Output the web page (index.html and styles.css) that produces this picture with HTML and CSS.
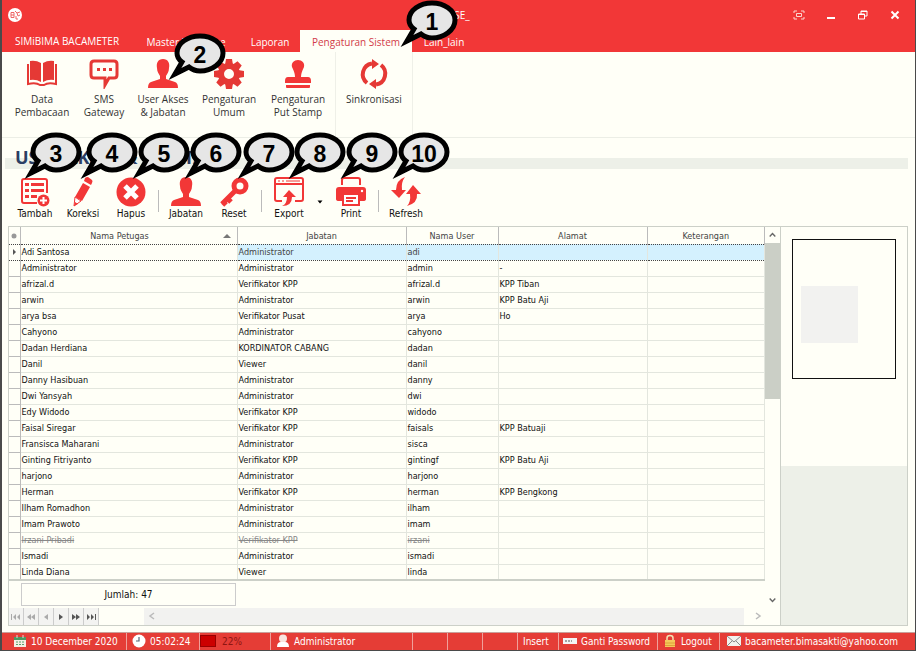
FILE: index.html
```html
<!DOCTYPE html>
<html lang="id">
<head>
<meta charset="utf-8">
<title>SIMiBIMA BACAMETER</title>
<link rel="stylesheet" href="styles.css">
</head>
<body>
<div class="window">
  <header class="titlebar">
    <svg class="logo" viewBox="0 0 14 14"><circle cx="7" cy="7" r="7" fill="#fff"/><path d="M3 4.500h3v5H3zM3 7h3M8 8v3h2M7 3l2 2 3-1M9 5l1 3 2-1" fill="none" stroke="#e66" stroke-width="1"/></svg>
    <span class="app-title">DATABASE_</span>
    <div class="win-buttons">
      <button aria-label="Layar penuh"><svg viewBox="0 0 12 12"><path d="M1 4V2h3M8 2h3v2M11 8v2H8M4 10H1V8M3.500 4.500h5v3h-5z" fill="none" stroke="#fbd6d0"/></svg></button>
      <button aria-label="Perkecil"><svg viewBox="0 0 12 12"><path d="M2 8h8v2H2z" fill="#fff"/></svg></button>
      <button aria-label="Pulihkan"><svg viewBox="0 0 12 12"><path d="M1.500 5h6v5h-6zM4 5V2h6v5H8M4 2.500h6M2 5.500h6" fill="none" stroke="#fff"/></svg></button>
      <button aria-label="Tutup"><svg viewBox="0 0 12 12"><path d="M2.500 2.500l7 7M9.500 2.500l-7 7" stroke="#fff" stroke-width="2"/></svg></button>
    </div>
  </header>
  <nav class="tabs">
    <a class="tab brand" href="#">SIMiBIMA BACAMETER</a>
    <a class="tab master" href="#">Master Database</a>
    <a class="tab laporan" href="#">Laporan</a>
    <a class="tab active" href="#">Pengaturan Sistem</a>
    <a class="tab lain" href="#">Lain_lain</a>
  </nav>
  <section class="ribbon">
    <div class="ribbon-group">
      <button class="rb wide"><svg viewBox="0 0 30 30"><path d="M3 2Q9 1 14 4V23Q9 20 3 21ZM27 2Q21 1 16 4V23Q21 20 27 21Z" fill="#e53935"/><path d="M1 5V25Q9 23 13 26H17Q21 23 29 25V5" fill="none" stroke="#e53935" stroke-width="2"/></svg>Data<br>Pembacaan</button>
      <button class="rb wide"><svg viewBox="0 0 30 30"><path d="M5 2H25Q28 2 28 5V16Q28 19 25 19H20L16 26V19H5Q2 19 2 16V5Q2 2 5 2Z" fill="none" stroke="#e53935" stroke-width="3"/><path d="M8 9h3v3H8zM14 9h3v3h-3zM20 9h3v3h-3z" fill="#e53935"/></svg>SMS<br>Gateway</button>
      <button class="rb narrow"><svg viewBox="0 0 30 30"><path d="M15 0C20 0 22 4 21 9C21 13 19 15 18 17V20L27 23Q30 24 30 29H0Q0 24 3 23L12 20V17C11 15 9 13 9 9C8 4 10 0 15 0Z" fill="#f23737"/></svg>User Akses<br>&amp; Jabatan</button>
      <button class="rb widest"><svg viewBox="0 0 30 30"><g fill="#e53935"><path id="teeth" d="M12 0h6l1 6h-8zM12 30h6l1-6h-8z"/><use href="#teeth" transform="rotate(45 15 15)"/><use href="#teeth" transform="rotate(90 15 15)"/><use href="#teeth" transform="rotate(135 15 15)"/></g><circle cx="15" cy="15" r="8" fill="none" stroke="#e53935" stroke-width="6"/></svg>Pengaturan<br>Umum</button>
      <button class="rb wide"><svg viewBox="0 0 30 30"><path d="M15 1C19 1 22 4 21 8Q18 14 18 18H25Q28 18 28 22V24H2V22Q2 18 5 18H12Q12 14 9 8C8 4 11 1 15 1Z" fill="#f23737"/><path d="M3 26H27V28Q27 29 26 29H4Q3 29 3 28Z" fill="#f23737"/></svg>Pengaturan<br>Put Stamp</button>
    </div>
    <div class="ribbon-group">
      <button class="rb widest"><svg viewBox="0 0 30 30"><path d="M8 24A11 11 0 0 1 13 4.500M22 6A11 11 0 0 1 17 25.500" fill="none" stroke="#e53935" stroke-width="4"/><path d="M13 0L20 5L13 10ZM17 20L10 25L17 30Z" fill="#e53935"/></svg>Sinkronisasi</button>
    </div>
  </section>
  <div class="heading"><h1>USER AKSES &amp; JABATAN</h1></div>
  <div class="toolbar">
    <button class="tb"><svg viewBox="0 0 30 30"><path d="M17 26H4Q2 26 2 24V4Q2 2 4 2H25Q27 2 27 4V16" fill="none" stroke="#f23737" stroke-width="2"/><path d="M5 6h4v3H5zM11 6h13v3H11zM5 12h4v3H5zM11 12h13v3H11zM5 18h4v3H5zM11 18h6v3h-6z" fill="#f23737"/><circle cx="23.500" cy="23.500" r="6" fill="#f23737"/><path d="M23.500 20v7M20 23.500h7" stroke="#fff" stroke-width="2"/></svg>Tambah</button>
    <button class="tb"><svg viewBox="0 0 30 30"><path d="M17 1Q18 0 20 0L24 3Q25 4 24 6L23 8L16 4ZM15 6L22 10L14 24L7 20Z" fill="#f23737"/><path d="M7 20L13 24L6 29Z" fill="#fff" stroke="#f23737"/><path d="M6 29l1-4 3 2z" fill="#f23737"/></svg>Koreksi</button>
    <button class="tb"><svg viewBox="0 0 30 30"><circle cx="15" cy="15" r="14.500" fill="#f23737"/><path d="M9 9L21 21M21 9L9 21" stroke="#fff" stroke-width="5"/></svg>Hapus</button>
    <i class="split"></i>
    <button class="tb"><svg viewBox="0 0 30 30"><path d="M15 0C20 0 22 4 21 9C21 13 19 15 18 17V20L27 23Q30 24 30 29H0Q0 24 3 23L12 20V17C11 15 9 13 9 9C8 4 10 0 15 0Z" fill="#f23737"/></svg>Jabatan</button>
    <button class="tb"><svg viewBox="0 0 30 30"><circle cx="21" cy="9" r="6" fill="none" stroke="#f23737" stroke-width="5"/><path d="M17 13L3 27M8 21l4 4M4 25l3 3" stroke="#f23737" stroke-width="5"/></svg>Reset</button>
    <i class="split"></i>
    <button class="tb"><svg viewBox="0 0 30 30"><path d="M8 24H3Q1 24 1 22V3Q1 1 3 1H27Q29 1 29 3V22Q29 24 27 24H21M1 7H29" fill="none" stroke="#f23737" stroke-width="2"/><path d="M4 4h2M8 4h2M12 4h14" stroke="#f23737"/><path d="M15 13L22 20H18Q18 29 8 29Q13 27 13 20H9Z" fill="#f23737"/></svg>Export</button>
    <button class="drop" aria-label="Pilihan export"><svg viewBox="0 0 6 4"><path d="M0.500 0.500h5L3 3.500z"/></svg></button>
    <button class="tb"><svg viewBox="0 0 30 30"><path d="M6 8V3Q6 1 8 1H22Q24 1 24 3V8" fill="none" stroke="#f23737" stroke-width="2"/><path d="M3 10H27Q30 10 30 13V22Q30 24 27 24H3Q0 24 0 22V13Q0 10 3 10Z" fill="#f23737"/><path d="M7 17H23V28H7Z" fill="#fff" stroke="#f23737" stroke-width="2"/><path d="M10 21h10M10 24h7" stroke="#f23737" stroke-width="2"/><circle cx="26" cy="14" r="1.200" fill="#fff"/></svg>Print</button>
    <i class="split"></i>
    <button class="tb"><svg viewBox="0 0 30 30"><path d="M14 0Q10 5 11 13H15L8 21L0 13H5Q5 3 14 0ZM22 8L30 17H26Q27 26 16 29Q20 25 19 17H15Z" fill="#f23737"/></svg>Refresh</button>
  </div>
  <main class="content">
    <section class="grid">
      <div class="grid-body">
        <table>
          <colgroup><col class="c0"><col class="c1"><col class="c2"><col class="c3"><col class="c4"><col class="c5"></colgroup>
          <thead><tr><th><svg class="mark" viewBox="0 0 10 10"><circle cx="5" cy="5" r="2.500" fill="#999"/></svg></th><th class="sorted">Nama Petugas<svg class="sort" viewBox="0 0 8 5"><path d="M0 5L4 1L8 5z" fill="#777"/></svg></th><th>Jabatan</th><th>Nama User</th><th>Alamat</th><th>Keterangan</th></tr></thead>
          <tbody>
            <tr class="selected"><td><svg class="mark" viewBox="0 0 10 10"><path d="M4 2L7 5L4 8z" fill="#555"/></svg></td><td>Adi Santosa</td><td>Administrator</td><td>adi</td><td></td><td></td></tr>
            <tr><td></td><td>Administrator</td><td>Administrator</td><td>admin</td><td>-</td><td></td></tr>
            <tr><td></td><td>afrizal.d</td><td>Verifikator KPP</td><td>afrizal.d</td><td>KPP Tiban</td><td></td></tr>
            <tr><td></td><td>arwin</td><td>Administrator</td><td>arwin</td><td>KPP Batu Aji</td><td></td></tr>
            <tr><td></td><td>arya bsa</td><td>Verifikator Pusat</td><td>arya</td><td>Ho</td><td></td></tr>
            <tr><td></td><td>Cahyono</td><td>Administrator</td><td>cahyono</td><td></td><td></td></tr>
            <tr><td></td><td>Dadan Herdiana</td><td>KORDINATOR CABANG</td><td>dadan</td><td></td><td></td></tr>
            <tr><td></td><td>Danil</td><td>Viewer</td><td>danil</td><td></td><td></td></tr>
            <tr><td></td><td>Danny Hasibuan</td><td>Administrator</td><td>danny</td><td></td><td></td></tr>
            <tr><td></td><td>Dwi Yansyah</td><td>Administrator</td><td>dwi</td><td></td><td></td></tr>
            <tr><td></td><td>Edy Widodo</td><td>Verifikator KPP</td><td>widodo</td><td></td><td></td></tr>
            <tr><td></td><td>Faisal Siregar</td><td>Verifikator KPP</td><td>faisals</td><td>KPP Batuaji</td><td></td></tr>
            <tr><td></td><td>Fransisca Maharani</td><td>Administrator</td><td>sisca</td><td></td><td></td></tr>
            <tr><td></td><td>Ginting Fitriyanto</td><td>Verifikator KPP</td><td>gintingf</td><td>KPP Batu Aji</td><td></td></tr>
            <tr><td></td><td>harjono</td><td>Administrator</td><td>harjono</td><td></td><td></td></tr>
            <tr><td></td><td>Herman</td><td>Verifikator KPP</td><td>herman</td><td>KPP Bengkong</td><td></td></tr>
            <tr><td></td><td>Ilham Romadhon</td><td>Administrator</td><td>ilham</td><td></td><td></td></tr>
            <tr><td></td><td>Imam Prawoto</td><td>Administrator</td><td>imam</td><td></td><td></td></tr>
            <tr class="inactive"><td></td><td>Irzani Pribadi</td><td>Verifikator KPP</td><td>irzani</td><td></td><td></td></tr>
            <tr><td></td><td>Ismadi</td><td>Administrator</td><td>ismadi</td><td></td><td></td></tr>
            <tr><td></td><td>Linda Diana</td><td>Viewer</td><td>linda</td><td></td><td></td></tr>
          </tbody>
        </table>
        <div class="summary">Jumlah: 47</div>
      </div>
      <div class="vscroll">
        <svg viewBox="0 0 16 16"><path d="M5 9.500L8 6.500L11 9.500" fill="none" stroke="#666" stroke-width="1.500"/></svg>
        <span class="thumb"></span>
        <svg viewBox="0 0 16 16"><path d="M5 6.500L8 9.500L11 6.500" fill="none" stroke="#666" stroke-width="1.500"/></svg>
      </div>
      <div class="navigator">
        <button class="off" aria-label="Pertama"><svg viewBox="0 0 12 12"><path d="M1 3h1v6H1zM6 3v6L3 6zM10 3v6L7 6z"/></svg></button>
        <button class="off" aria-label="Halaman sebelumnya"><svg viewBox="0 0 12 12"><path d="M6 3v6L2 6zM10 3v6L6 6z"/></svg></button>
        <button class="off" aria-label="Sebelumnya"><svg viewBox="0 0 12 12"><path d="M8 3v6L4 6z"/></svg></button>
        <button aria-label="Berikutnya"><svg viewBox="0 0 12 12"><path d="M4 3v6l4-3z"/></svg></button>
        <button aria-label="Halaman berikutnya"><svg viewBox="0 0 12 12"><path d="M2 3v6l4-3zM6 3v6l4-3z"/></svg></button>
        <button aria-label="Terakhir"><svg viewBox="0 0 12 12"><path d="M2 3v6l3-3zM6 3v6l3-3zM10 3h1v6h-1z"/></svg></button>
        <div class="hscroll">
          <svg viewBox="0 0 16 16"><path d="M10 5L6 8L10 11" fill="none" stroke="#bbb" stroke-width="1.500"/></svg>
        </div>
        <svg class="hright" viewBox="0 0 16 16"><path d="M6 5L10 8L6 11" fill="none" stroke="#bbb" stroke-width="1.500"/></svg>
      </div>
    </section>
    <aside class="side"><div class="side-top"><div class="photo"><span></span></div></div></aside>
  </main>
  <footer class="status">
    <span class="date"><svg viewBox="0 0 14 14"><path d="M1 3h12v10H1z" fill="#f4efe4"/><path d="M1 3h12v3H1z" fill="#4c9a62"/><path d="M4 1v3M10 1v3" stroke="#ddd"/><path d="M3 8h8M3 10.500h8" stroke="#59a06b" stroke-dasharray="2 1"/></svg>10 December 2020</span>
    <span class="time"><svg viewBox="0 0 14 14"><circle cx="7" cy="7" r="6.500" fill="#fff"/><path d="M7 3v4H4" fill="none" stroke="#567" stroke-width="1.200"/></svg>05:02:24</span>
    <span class="load"><i class="meter"></i>22%</span>
    <span class="user"><svg viewBox="0 0 14 14"><circle cx="7" cy="4.500" r="4" fill="#f8e5df"/><path d="M1 13Q1 8 5 8H9Q13 8 13 13Z" fill="#fff"/></svg>Administrator</span>
    <span class="blank"></span><span class="blank"></span><span class="blank"></span>
    <span class="insert">Insert</span>
    <a class="password" href="#"><svg viewBox="0 0 14 14"><path d="M0 4h14v6H0z" fill="#f4f4f4"/><path d="M2 7h7" stroke="#555" stroke-dasharray="2 1"/></svg>Ganti Password</a>
    <a class="logout" href="#"><svg viewBox="0 0 14 14"><path d="M4 7V4Q4 1.500 7 1.500T10 4V7" fill="none" stroke="#f3e2b4" stroke-width="1.500"/><path d="M2 6h10v7H2z" fill="#f5c95b"/><path d="M2 9h10M2 11.500h10" stroke="#dca23a"/></svg>Logout</a>
    <a class="mail" href="#"><svg viewBox="0 0 14 14"><path d="M0 2h14v10H0z" fill="#f2f2ee"/><path d="M0 2l7 6 7-6M0 12l5-5M14 12L9 7" fill="none" stroke="#888"/></svg>bacameter.bimasakti@yahoo.com</a>
  </footer>
</div>
<svg class="callouts" viewBox="0 0 916 651">
  <defs><path id="bubble" d="M-25 20L-18 8C-22 5-23 2-23-1C-23-11-12-18 0-18S23-11 23-1S12 17 0 17Q-6 17-11 13Z"/></defs>
  <g class="bubbles">
    <use href="#bubble" x="432" y="21"/><use href="#bubble" x="200" y="54"/><use href="#bubble" x="56" y="153"/><use href="#bubble" x="112" y="153"/><use href="#bubble" x="164" y="153"/><use href="#bubble" x="216" y="153"/><use href="#bubble" x="269" y="153"/><use href="#bubble" x="320" y="153"/><use href="#bubble" x="372" y="153"/><use href="#bubble" x="424" y="153"/>
  </g>
  <g class="numbers">
    <text x="432" y="30">1</text><text x="200" y="63">2</text><text x="56" y="162">3</text><text x="112" y="162">4</text><text x="164" y="162">5</text><text x="216" y="162">6</text><text x="269" y="162">7</text><text x="320" y="162">8</text><text x="372" y="162">9</text><text x="424" y="162">10</text>
  </g>
</svg>
</body>
</html>
```
FILE: styles.css
```css
* { box-sizing: border-box; }
body { margin: 0; background: #fffff7; color: #111; font: 9px/14px "DejaVu Sans Condensed", "DejaVu Sans", sans-serif; }
button { border: 0; padding: 0; background: none; color: inherit; font: inherit; }
a { color: inherit; text-decoration: none; }
svg { display: block; }

.window { display: flex; flex-direction: column; min-height: 100vh; border: solid #4a4a4a; border-width: 0 1px 1px 2px; background: #fffff7; }

/* Title bar and tabs */
.titlebar { display: flex; align-items: center; height: 30px; padding: 0 14px 0 6px; background: #f23737; color: #fff; font: 10px/14px "Open Sans", sans-serif; }
.logo { width: 14px; height: 14px; }
.app-title { margin-left: 394px; }
.win-buttons { display: flex; gap: 20px; margin-left: auto; }
.win-buttons svg { width: 12px; height: 12px; }

.tabs { display: flex; height: 22px; background: #f23737; color: #fff; font: 10px/24px "Open Sans", sans-serif; }
.tab { text-align: center; white-space: nowrap; }
.brand { width: 130px; line-height: 22px; }
.master { width: 108px; }
.laporan { width: 60px; }
.active { width: 112px; background: #fffff7; color: #d23c48; }
.lain { width: 64px; }

/* Ribbon */
.ribbon { display: flex; height: 86px; padding-left: 7px; border-bottom: 1px solid #eceee6; color: #333; font: 10px/13px "Open Sans", sans-serif; }
.ribbon-group { display: flex; align-items: flex-start; padding: 0 6px 0 2px; border-right: 1px solid #eff0e8; }
.ribbon-group:last-child { padding: 0; }
.rb { padding-top: 7px; text-align: center; white-space: nowrap; }
.rb svg { width: 30px; height: 30px; margin: 0 auto 4px; }
.narrow { width: 56px; }
.wide { width: 62px; }
.widest { width: 76px; }

.heading { height: 32px; margin: 0 7px 0 3px; background: linear-gradient(transparent 20px, #edf0e8 20px, #edf0e8 31px, transparent 31px); }
.heading h1 { height: 32px; margin: 0; padding-left: 10px; color: #2b3e63; font: bold 18px/38px "Noto Sans", sans-serif; }

/* Toolbar */
.toolbar { display: flex; align-items: flex-start; height: 56px; padding-left: 9px; font-size: 10px; }
.tb { width: 48px; padding-top: 7px; text-align: center; }
.tb svg { width: 30px; height: 30px; margin: 0 auto; }
.split { width: 1px; height: 22px; margin: 20px 3px 0; background: #bbb; }
.drop { width: 14px; padding-top: 30px; }
.drop svg { width: 6px; height: 4px; margin: 0 auto; }

/* Data grid */
.content { display: flex; flex: 1; margin: 0 7px 6px 6px; border: 1px solid #ccd0c8; }
.grid { display: grid; grid-template: 1fr 17px / 1fr 16px; flex: 1; }
table { width: 100%; height: 354px; table-layout: fixed; border-collapse: collapse; border-bottom: 2px solid #ccd0c8; }
.c0 { width: 11px; }
.c1 { width: 217px; }
.c2 { width: 169px; }
.c3 { width: 92px; }
.c4 { width: 149px; }
th { height: 17px; padding: 1px 0 0; border-right: 1px solid #bbb; color: #444; font-weight: normal; }
td { height: 16px; padding: 0 1px; border-right: 1px solid #e3e6de; border-bottom: 1px solid #e3e6de; white-space: nowrap; }
td:first-child { padding: 0; border-color: #bbb; }
.sorted { position: relative; padding-right: 18px; }
.sort { position: absolute; top: 6px; right: 6px; width: 8px; height: 5px; }
.mark { width: 10px; height: 10px; }
.selected td { border-top: 1px dotted #444; border-bottom: 1px dotted #444; }
.selected td:nth-child(n+3) { background: #d4f1fe; color: #444; }
.inactive { color: #888; text-decoration: line-through; }
.summary { width: 215px; height: 23px; margin: 2px 0 2px 12px; border: 1px solid #ccc; text-align: center; font-size: 10px; line-height: 22px; }

.vscroll { display: flex; flex-direction: column; border-right: 1px solid #ccd0c8; }
.vscroll svg { width: 15px; height: 16px; }
.thumb { height: 156px; margin-bottom: auto; background: #cbcfc6; }

.navigator { display: flex; grid-column: 1 / 3; border-right: 1px solid #ccd0c8; }
.navigator button { width: 15px; background: #f3f3f1; border-right: 1px solid #ccc; fill: #555; }
.navigator .off { fill: #aaa; }
.navigator button svg { width: 12px; height: 12px; margin: 0 auto; }
.hscroll { flex: 1; margin-left: 45px; background: #f2f2f0; }
.hscroll svg, .hright { width: 16px; height: 16px; }
.hright { margin: 0 14px 0 6px; }

/* Photo panel */
.side { width: 126px; background: #edf0e8; }
.side-top { height: 239px; padding: 12px 11px; background: #fffff7; }
.photo { height: 140px; padding: 46px 8px; border: 1px solid #111; }
.photo span { display: block; width: 57px; height: 57px; background: #f2f2f0; }

/* Status bar */
.status { display: flex; height: 18px; padding-left: 11px; background: #e53d36; border-top: 1px solid #c9a09a; color: #fff; font-size: 10px; line-height: 18px; }
.status > * { display: flex; gap: 4px; padding-left: 5px; border-left: 1px solid #f0a09a; white-space: nowrap; }
.status svg { flex: none; width: 14px; height: 14px; margin-top: 1px; }
.status .date { width: 113px; padding: 0; border: 0; }
.time { width: 73px; }
.status .load { width: 71px; gap: 6px; padding-left: 0; color: #8e1512; }
.meter { width: 16px; height: 12px; margin-top: 2px; background: #c00; border: 1px solid #900; }
.user { width: 142px; }
.blank { width: 35px; }
.insert { width: 41px; }
.status .password { width: 99px; padding-left: 4px; }
.logout { width: 62px; }
.status .mail { padding-left: 7px; }

/* Numbered callouts */
.callouts { position: absolute; top: 0; left: 0; width: 916px; height: 651px; pointer-events: none; }
.bubbles { fill: #e6e6e6; stroke: #000; stroke-width: 5; }
.numbers { font: bold 23px "Liberation Sans", sans-serif; text-anchor: middle; }
```
